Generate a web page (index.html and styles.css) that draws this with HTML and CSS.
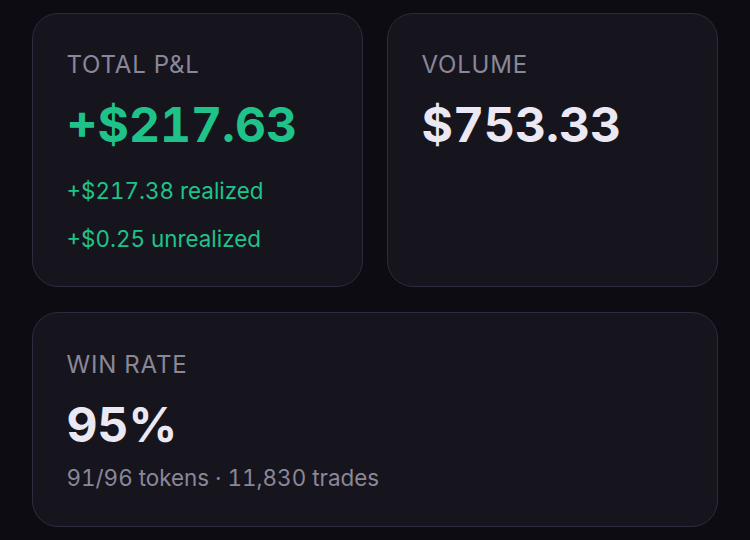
FILE: index.html
```html
<!DOCTYPE html>
<html>
<head>
<meta charset="utf-8">
<link rel="stylesheet" href="styles.css">
</head>
<body>
<div class="grid">
  <div class="card">
    <div class="label">TOTAL P&amp;L</div>
    <div class="value green">+$217.63</div>
    <div class="sub green first">+$217.38 realized</div>
    <div class="sub green">+$0.25 unrealized</div>
  </div>
  <div class="card">
    <div class="label">VOLUME</div>
    <div class="value">$753.33</div>
  </div>
  <div class="card wide">
    <div class="label">WIN RATE</div>
    <div class="value win">95%</div>
    <div class="meta">91/96 tokens · 11,830 trades</div>
  </div>
</div>
</body>
</html>
```
FILE: styles.css
```css
html, body {
  margin: 0;
  padding: 0;
  background: #0d0c13;
  font-family: Inter, "Noto Sans", sans-serif;
  font-variant-numeric: tabular-nums;
}
.grid {
  display: grid;
  grid-template-columns: 331px 331px;
  grid-template-rows: 274px 215px;
  column-gap: 24px;
  row-gap: 25px;
  padding: 13px 32px;
}
.card {
  box-sizing: border-box;
  background: #16151e;
  border: 1.5px solid #2d2b3d;
  border-radius: 26px;
  padding: 37px 33.5px 0;
}
.card.wide {
  padding-top: 38px;
  grid-column: 1 / 3;
}
.label {
  font-size: 24px;
  letter-spacing: 0.8px;
  color: #8a8798;
  line-height: 28px;
}
.value {
  font-size: 48px;
  font-weight: 700;
  color: #ebe8f3;
  line-height: 56px;
  margin-top: 18px;
}
.value.win {
  margin-top: 18px;
}
.green {
  color: #1fc389;
}
.sub {
  font-size: 22.4px;
  line-height: 28px;
  margin-top: 19.5px;
}
.sub.first {
  margin-top: 24px;
}
.meta {
  font-size: 22.4px;
  color: #8a8798;
  line-height: 28px;
  margin-top: 11px;
}
```
